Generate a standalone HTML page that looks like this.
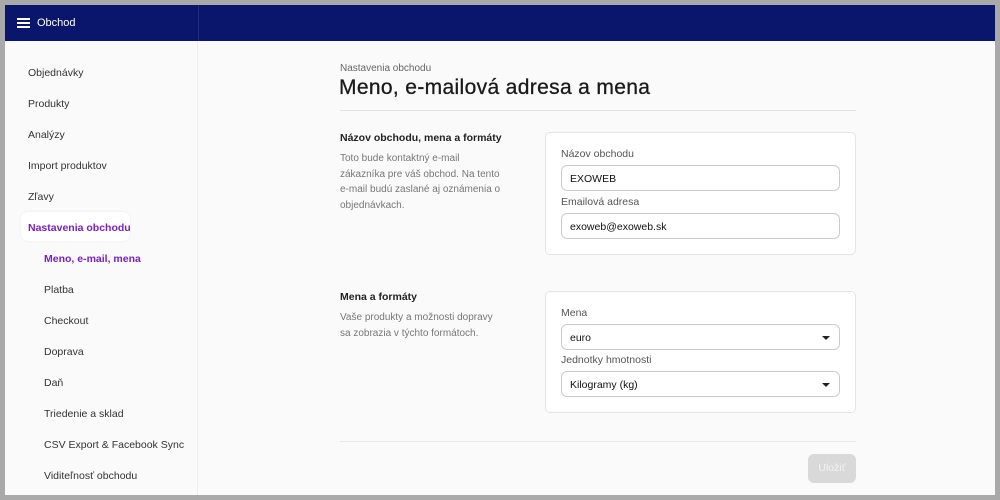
<!DOCTYPE html>
<html><head><meta charset="utf-8"><style>
*{margin:0;padding:0;box-sizing:border-box}
body{width:1000px;height:500px;background:#a9a9a9;font-family:"Liberation Sans",sans-serif;overflow:hidden;position:relative}
#app{position:absolute;left:5px;top:5px;width:990px;height:490px;background:#fafafa;overflow:hidden}
.hdr{position:absolute;left:0;top:0;width:990px;height:36px;background:#0a166c}
.hdr .sep{position:absolute;left:193px;top:0;width:1px;height:36px;background:#1e2a7e}
.hdr .t{position:absolute;left:32px;top:12px;color:#fff;font-size:11px}
.ham{position:absolute;left:12px;top:13px;width:13px}
.ham i{display:block;height:1.5px;background:#fff;margin-bottom:2.5px}
.sb{position:absolute;left:0;top:36px;width:193px;height:454px;border-right:1px solid #eee}
.it{position:absolute;font-size:10.5px;color:#333}
.act{position:absolute;left:16px;top:171px;width:109px;height:29px;background:#fff;border-radius:7px;box-shadow:0 0 2px rgba(0,0,0,.08)}
.pur{color:#7a1fc4;font-weight:bold}
.lbl{position:absolute;font-size:10.5px;color:#555}
.card{position:absolute;left:540px;width:311px;background:#fff;border:1px solid #e4e4e4;border-radius:5px}
.inp{position:absolute;left:556px;width:279px;height:26px;border:1px solid #ccc;border-radius:6px;background:#fff;font-size:10.5px;color:#111;padding:7px 0 0 8px}
.arr{position:absolute;right:9px;top:11px;width:0;height:0;border-left:4px solid transparent;border-right:4px solid transparent;border-top:4px solid #222}
.desc{position:absolute;left:335px;font-size:10px;line-height:15.5px;color:#777;white-space:nowrap}
</style></head><body><div id="app">
<div class="hdr"><div class="ham"><i></i><i></i><i></i></div><div class="t">Obchod</div><div class="sep"></div></div>
<div class="sb">
<div class="act"></div>
<div class="it" style="left:23px;top:26px">Objednávky</div>
<div class="it" style="left:23px;top:57px">Produkty</div>
<div class="it" style="left:23px;top:88px">Analýzy</div>
<div class="it" style="left:23px;top:119px">Import produktov</div>
<div class="it" style="left:23px;top:150px">Zľavy</div>
<div class="it pur" style="left:23px;top:181px">Nastavenia obchodu</div>
<div class="it pur" style="left:39px;top:212px">Meno, e-mail, mena</div>
<div class="it" style="left:39px;top:243px">Platba</div>
<div class="it" style="left:39px;top:274px">Checkout</div>
<div class="it" style="left:39px;top:305px">Doprava</div>
<div class="it" style="left:39px;top:336px">Daň</div>
<div class="it" style="left:39px;top:367px">Triedenie a sklad</div>
<div class="it" style="left:39px;top:398px">CSV Export &amp; Facebook Sync</div>
<div class="it" style="left:39px;top:429px">Viditeľnosť obchodu</div>
</div>
<div class="lbl" style="left:335px;top:58px;font-size:10px;color:#666">Nastavenia obchodu</div>
<div style="position:absolute;left:334px;top:71px;font-size:21px;color:#1a1a1a;letter-spacing:0.35px;-webkit-text-stroke:0.3px #1a1a1a">Meno, e-mailová adresa a mena</div>
<div style="position:absolute;left:335px;top:105px;width:516px;height:1px;background:#e3e3e3"></div>
<div style="position:absolute;left:335px;top:127px;font-size:10.5px;font-weight:bold;color:#222">Názov obchodu, mena a formáty</div>
<div class="desc" style="top:146px">Toto bude kontaktný e-mail<br>zákazníka pre váš obchod. Na tento<br>e-mail budú zaslané aj oznámenia o<br>objednávkach.</div>
<div class="card" style="top:127px;height:123px"></div>
<div class="lbl" style="left:556px;top:143px">Názov obchodu</div>
<div class="inp" style="top:160px">EXOWEB</div>
<div class="lbl" style="left:556px;top:191px">Emailová adresa</div>
<div class="inp" style="top:208px">exoweb@exoweb.sk</div>
<div style="position:absolute;left:335px;top:286px;font-size:10.5px;font-weight:bold;color:#222">Mena a formáty</div>
<div class="desc" style="top:305px">Vaše produkty a možnosti dopravy<br>sa zobrazia v týchto formátoch.</div>
<div class="card" style="top:286px;height:122px"></div>
<div class="lbl" style="left:556px;top:302px">Mena</div>
<div class="inp" style="top:319px">euro<div class="arr"></div></div>
<div class="lbl" style="left:556px;top:349px">Jednotky hmotnosti</div>
<div class="inp" style="top:366px">Kilogramy (kg)<div class="arr"></div></div>
<div style="position:absolute;left:335px;top:436px;width:516px;height:1px;background:#e8e8e8"></div>
<div style="position:absolute;left:803px;top:449px;width:48px;height:29px;background:#d9d9d9;border-radius:6px;color:#f2f2f2;font-size:10.5px;text-align:center;line-height:29px">Uložiť</div>
</div></body></html>
